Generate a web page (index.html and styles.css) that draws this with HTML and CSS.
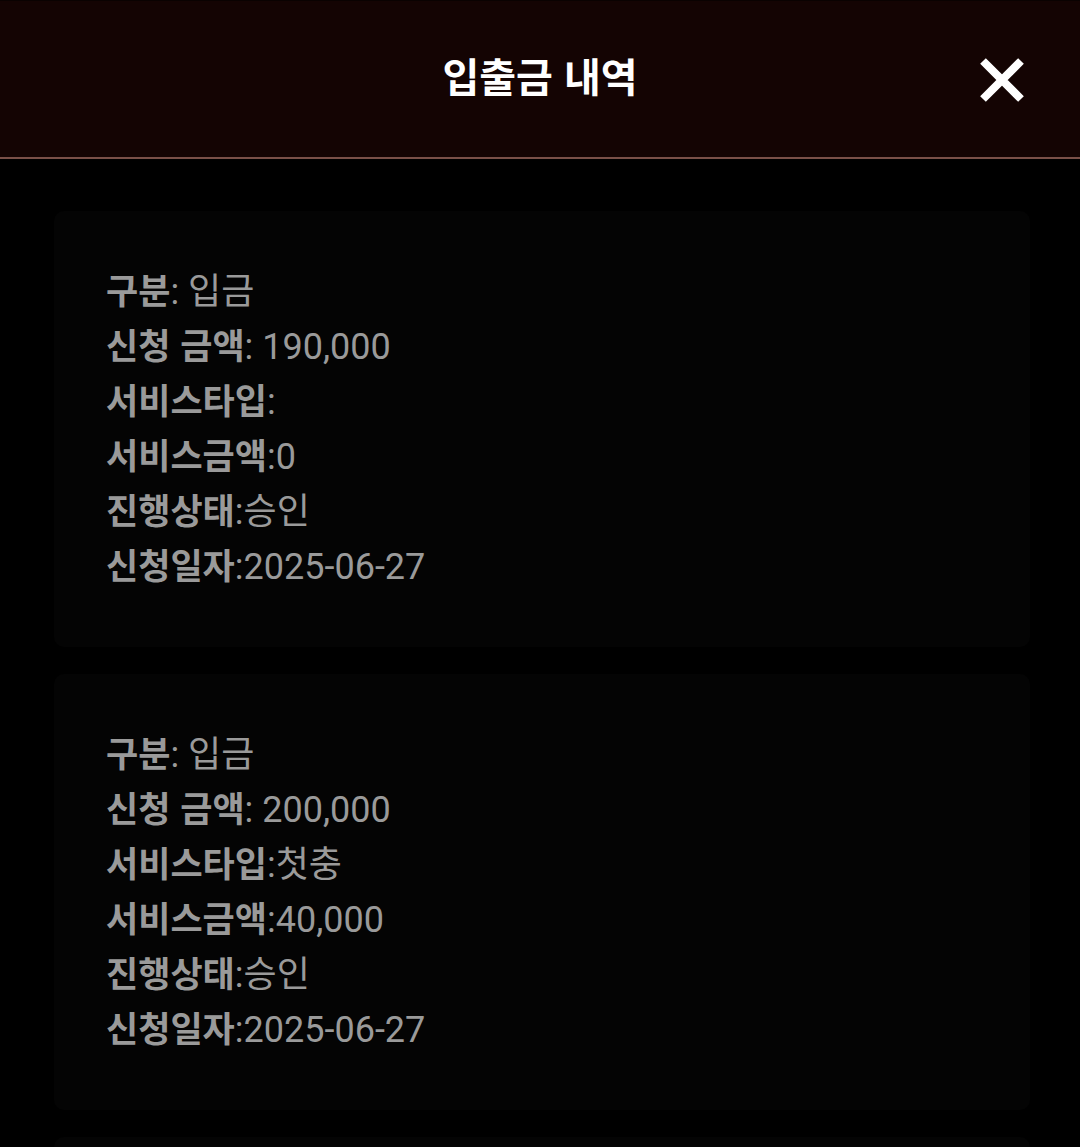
FILE: index.html
```html
<!DOCTYPE html>
<html lang="ko">
<head>
<meta charset="utf-8">
<link rel="stylesheet" href="styles.css">
</head>
<body>
<header class="bar">
  <h1 class="title">입출금 내역</h1>
  <button class="close" aria-label="닫기">
    <svg viewBox="0 0 48 48" width="48" height="48"><path d="M5 5 L43 43 M43 5 L5 43" stroke="#fff" stroke-width="8" stroke-linecap="butt"/></svg>
  </button>
</header>
<main class="list">
  <section class="card">
    <p class="row"><b>구분</b>: 입금</p>
    <p class="row"><b>신청 금액</b>: 190,000</p>
    <p class="row"><b>서비스타입</b>:</p>
    <p class="row"><b>서비스금액</b>:0</p>
    <p class="row"><b>진행상태</b>:승인</p>
    <p class="row"><b>신청일자</b>:2025-06-27</p>
  </section>
  <section class="card">
    <p class="row"><b>구분</b>: 입금</p>
    <p class="row"><b>신청 금액</b>: 200,000</p>
    <p class="row"><b>서비스타입</b>:첫충</p>
    <p class="row"><b>서비스금액</b>:40,000</p>
    <p class="row"><b>진행상태</b>:승인</p>
    <p class="row"><b>신청일자</b>:2025-06-27</p>
  </section>
  <section class="card"></section>
</main>
</body>
</html>
```
FILE: styles.css
```css
html, body {
  margin: 0;
  padding: 0;
  background: #000;
  height: 1147px;
  overflow: hidden;
}
body {
  font-family: Roboto, "Noto Sans CJK KR", sans-serif;
  color: #9a9a9a;
}
.bar {
  position: relative;
  height: 156px;
  background: #140403;
  border-top: 1px solid #0a0201;
  border-bottom: 2px solid #7a5048;
  display: flex;
  align-items: center;
  justify-content: center;
  box-sizing: content-box;
}
.title {
  margin: 0;
  font-family: "Noto Sans CJK KR", sans-serif;
  font-weight: 700;
  font-size: 40px;
  color: #fff;
  line-height: 1;
  margin-top: -8px;
}
.close {
  position: absolute;
  right: 54px;
  top: 55px;
  width: 48px;
  height: 48px;
  padding: 0;
  border: 0;
  background: transparent;
}
.close svg { display: block; }
.list {
  display: flex;
  flex-direction: column;
  gap: 27px;
  padding: 52px 50px 0 54px;
}
.card {
  background: #040404;
  border-radius: 10px;
  padding: 50px 52px 56px;
  min-height: 330px;
}
.row {
  margin: 0;
  font-size: 36px;
  line-height: 55px;
  height: 55px;
  white-space: nowrap;
}
.row b {
  font-family: "Noto Sans CJK KR", sans-serif;
  font-weight: 700;
  font-size: 35px;
}
```
